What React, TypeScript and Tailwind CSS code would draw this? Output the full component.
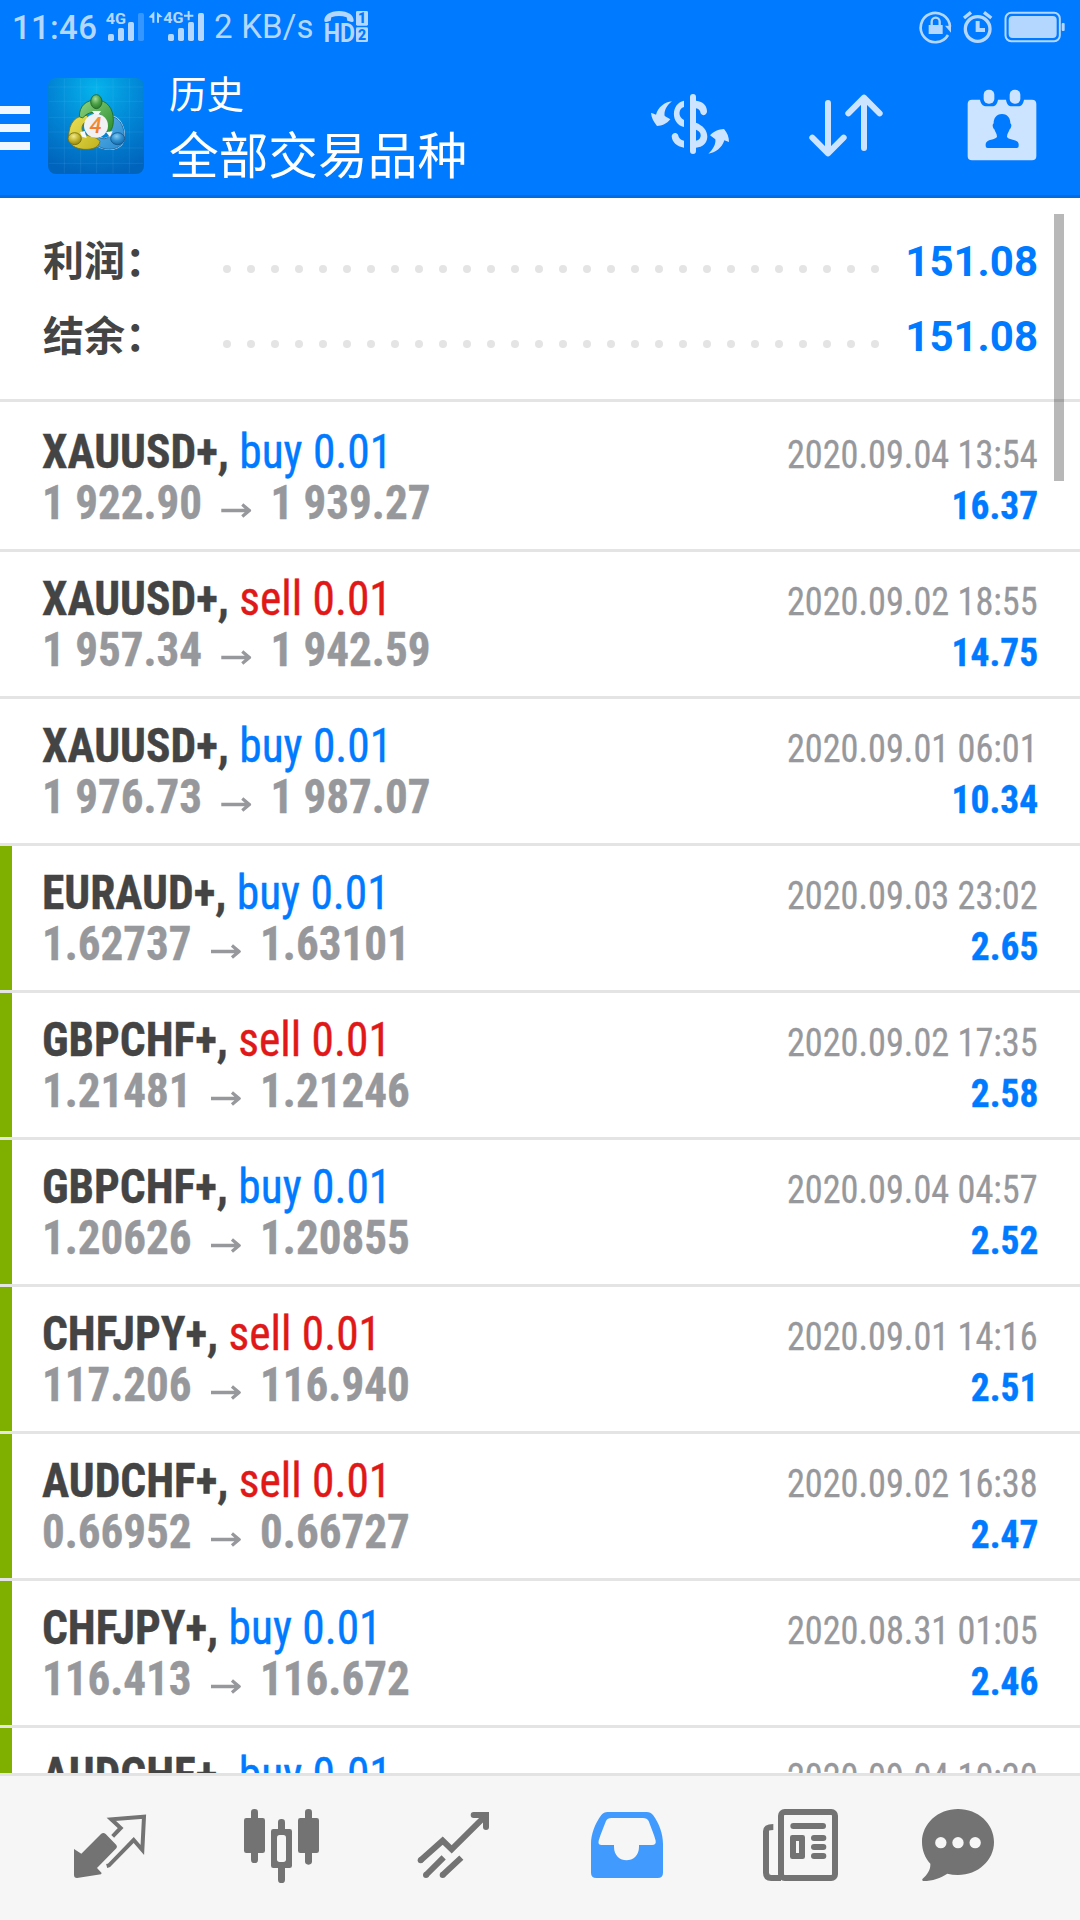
import type { ReactNode } from "react";
import clsx from "clsx";

type Side = "buy" | "sell";

interface Deal {
  symbol: string;
  side: Side;
  volume: string;
  open: string;
  close: string;
  time: string;
  profit: string;
  marked?: boolean;
}

const deals: Deal[] = [
  { symbol: "XAUUSD+", side: "buy", volume: "0.01", open: "1 922.90", close: "1 939.27", time: "2020.09.04 13:54", profit: "16.37" },
  { symbol: "XAUUSD+", side: "sell", volume: "0.01", open: "1 957.34", close: "1 942.59", time: "2020.09.02 18:55", profit: "14.75" },
  { symbol: "XAUUSD+", side: "buy", volume: "0.01", open: "1 976.73", close: "1 987.07", time: "2020.09.01 06:01", profit: "10.34" },
  { symbol: "EURAUD+", side: "buy", volume: "0.01", open: "1.62737", close: "1.63101", time: "2020.09.03 23:02", profit: "2.65", marked: true },
  { symbol: "GBPCHF+", side: "sell", volume: "0.01", open: "1.21481", close: "1.21246", time: "2020.09.02 17:35", profit: "2.58", marked: true },
  { symbol: "GBPCHF+", side: "buy", volume: "0.01", open: "1.20626", close: "1.20855", time: "2020.09.04 04:57", profit: "2.52", marked: true },
  { symbol: "CHFJPY+", side: "sell", volume: "0.01", open: "117.206", close: "116.940", time: "2020.09.01 14:16", profit: "2.51", marked: true },
  { symbol: "AUDCHF+", side: "sell", volume: "0.01", open: "0.66952", close: "0.66727", time: "2020.09.02 16:38", profit: "2.47", marked: true },
  { symbol: "CHFJPY+", side: "buy", volume: "0.01", open: "116.413", close: "116.672", time: "2020.08.31 01:05", profit: "2.46", marked: true },
  { symbol: "AUDCHF+", side: "buy", volume: "0.01", open: "0.66512", close: "0.66735", time: "2020.09.04 10:20", profit: "2.44", marked: true },
];

const totals = [
  { label: "利润：", value: "151.08" },
  { label: "结余：", value: "151.08" },
];

function StatusBar() {
  return (
    <div className="flex h-[54px] items-center text-[33px] leading-[54px] text-[#b3d7ff]">
      <span className="ml-[12px] mt-[2px] w-[92px] whitespace-nowrap font-medium tracking-[0.3px]">11:46</span>
      <svg className="h-[54px] w-[106px] shrink-0 fill-[#b3d7ff]" viewBox="312 0 318 162" fontFamily="Roboto" fontWeight="700">
        <text x="317" y="71" fontSize="43" textLength="61" lengthAdjust="spacingAndGlyphs">4G</text>
        <rect x="324" y="102" width="18" height="21" rx="5" />
        <rect x="354" y="84" width="18" height="39" rx="5" />
        <rect x="384" y="66" width="18" height="57" rx="5" />
        <rect x="414" y="39" width="18" height="84" rx="5" opacity="0.3" />
        <path d="M446 52L463 34V68H457V54ZM471 36L488 51L477 52V68H471Z" />
        <text x="490" y="68" fontSize="43" textLength="61" lengthAdjust="spacingAndGlyphs">4G</text>
        <path d="M563 33h6v11h11v6h-11v11h-6v-11h-11v-6h11z" />
        <rect x="504" y="102" width="18" height="21" rx="5" />
        <rect x="534" y="84" width="18" height="39" rx="5" />
        <rect x="564" y="66" width="18" height="57" rx="5" />
        <rect x="594" y="39" width="18" height="84" rx="5" />
      </svg>
      <span className="ml-[4px] w-[108px] whitespace-nowrap tracking-[0.2px]">2 KB/s</span>
      <svg className="h-[54px] w-[48px] shrink-0 fill-[#b3d7ff]" viewBox="966 0 144 162" fontFamily="Roboto" fontWeight="900">
        <path d="M973 63C972 46 990 33 1017 33S1062 46 1061 63Q1060 67 1055 66L1042 62L1040 52Q1017 44 994 52L992 62L979 66Q974 67 973 63Z" />
        <text x="971" y="126" fontSize="80" textLength="94" lengthAdjust="spacingAndGlyphs" fontWeight="700">HD</text>
        <rect x="1068" y="33" width="36" height="44" rx="4" />
        <rect x="1068" y="82" width="36" height="44" rx="4" />
        <text x="1086" y="70" fontSize="42" textAnchor="middle" fill="#007aff">1</text>
        <text x="1086" y="119" fontSize="42" textAnchor="middle" fill="#007aff">2</text>
      </svg>
      <svg className="ml-auto mr-[10.67px] h-[54px] w-[156px] shrink-0" viewBox="880 0 468 162" fill="none" stroke="#b3d7ff">
        <path d="M991 80A44 44 0 1 0 985 105" strokeWidth="8" />
        <path d="M976 77L994 78V98Z" fill="#b3d7ff" stroke="none" />
        <rect x="927" y="75" width="42" height="27" fill="#b3d7ff" stroke="none" />
        <path d="M936 76V65a12 12 0 0 1 24 0V76" strokeWidth="7" />
        <circle cx="1074" cy="87" r="37" strokeWidth="10" />
        <path d="M1033 54L1054 37M1115 54L1093 37" strokeWidth="10" />
        <path d="M1074 63V90H1096" strokeWidth="12" />
        <rect x="1157.500" y="38.500" width="163" height="85" rx="17" strokeWidth="6" />
        <rect x="1167" y="48" width="144" height="66" rx="12" fill="#b3d7ff" stroke="none" />
        <rect x="1326" y="69" width="9" height="24" rx="3" fill="#b3d7ff" stroke="none" />
      </svg>
    </div>
  );
}

function AppLogo() {
  return (
    <svg className="h-[96px] w-[96px] shrink-0" viewBox="144 234 288 288">
      <defs>
        <radialGradient id="tile" cx="0.5" cy="0.12" r="0.9">
          <stop offset="0" stopColor="#05b4ec" />
          <stop offset="0.5" stopColor="#0287d6" />
          <stop offset="1" stopColor="#0064bc" />
        </radialGradient>
        <linearGradient id="green" x1="0" y1="0" x2="1" y2="1">
          <stop offset="0" stopColor="#8fd583" />
          <stop offset="1" stopColor="#2a8c2c" />
        </linearGradient>
        <linearGradient id="yellow" x1="0" y1="0" x2="1" y2="1">
          <stop offset="0" stopColor="#ece25a" />
          <stop offset="1" stopColor="#c0b21c" />
        </linearGradient>
        <linearGradient id="blue" x1="0" y1="0" x2="1" y2="1">
          <stop offset="0" stopColor="#5fb4ea" />
          <stop offset="1" stopColor="#2a8cd0" />
        </linearGradient>
        <radialGradient id="greenHead" cx="0.42" cy="0.3" r="0.75">
          <stop offset="0" stopColor="#a6dc9c" />
          <stop offset="0.5" stopColor="#4fa348" />
          <stop offset="1" stopColor="#27752a" />
        </radialGradient>
        <radialGradient id="yellowHead" cx="0.42" cy="0.3" r="0.75">
          <stop offset="0" stopColor="#f0ea90" />
          <stop offset="0.5" stopColor="#c4b62e" />
          <stop offset="1" stopColor="#8b8010" />
        </radialGradient>
        <radialGradient id="blueHead" cx="0.42" cy="0.3" r="0.75">
          <stop offset="0" stopColor="#84caf2" />
          <stop offset="0.5" stopColor="#3190d0" />
          <stop offset="1" stopColor="#1262a2" />
        </radialGradient>
        <linearGradient id="four" x1="0" y1="0" x2="0" y2="1">
          <stop offset="0" stopColor="#f9a12e" />
          <stop offset="1" stopColor="#ea6a30" />
        </linearGradient>
      </defs>
      <rect x="144" y="234" width="288" height="288" rx="24" fill="url(#tile)" />
      <path
        d="M193 236V520M242 236V520M290 236V520M339 236V520M388 236V520M146 261H430M146 304H430M146 352H430M146 396H430M146 444H430M146 490H430"
        stroke="#7fd4ff"
        strokeOpacity="0.18"
        strokeWidth="2"
      />
      <g strokeWidth="2.500">
        <path d="M338 350C362 356 376 386 372 418C366 444 338 450 318 447C290 442 274 424 266 402L290 406C306 422 326 418 332 402C334 390 330 380 322 372Z" fill="url(#blue)" stroke="#d4ecfb" strokeWidth="5" />
        <path d="M338 350C362 356 376 386 372 418C366 444 338 450 318 447C290 442 274 424 266 402L290 406C306 422 326 418 332 402C334 390 330 380 322 372Z" fill="url(#blue)" stroke="#14609c" />
        <path d="M206 412C206 368 226 346 262 346L266 360C244 368 240 390 254 402C268 412 286 406 300 424C296 442 280 449 252 448C226 446 208 436 206 412Z" fill="url(#yellow)" stroke="#7c7108" />
        <path d="M238 350C238 318 258 300 288 300C322 300 340 326 340 360C340 380 334 392 326 398L306 384C314 372 314 358 304 346C290 330 262 336 248 354Z" fill="url(#green)" stroke="#1a6a24" />
        <path d="M276 333H303L297 342H283ZM240 397L254 393L260 414L246 410ZM318 396L338 394L330 412Z" fill="#f4faff" />
        <ellipse cx="289" cy="305" rx="17" ry="21" fill="url(#greenHead)" stroke="#1f6424" />
        <ellipse cx="224" cy="416" rx="20" ry="18" fill="url(#yellowHead)" stroke="#786d0c" />
        <ellipse cx="353" cy="416" rx="21" ry="18" fill="url(#blueHead)" stroke="#10558f" />
      </g>
      <circle cx="288" cy="377" r="36" fill="#f1f1f4" />
      <text x="287" y="400" fontSize="66" fontFamily="Roboto" fontWeight="500" fontStyle="italic" textAnchor="middle" fill="url(#four)">4</text>
    </svg>
  );
}

function HeaderIcon({ viewBox, label, children }: { viewBox: string; label: string; children: ReactNode }) {
  return (
    <button aria-label={label} className="flex w-[156px] items-center justify-center">
      <svg className="h-[96px] w-[96px] fill-[#cce4ff]" viewBox={viewBox}>
        {children}
      </svg>
    </button>
  );
}

function Header() {
  return (
    <header className="flex h-[198px] shrink-0 flex-col border-b-[3px] border-[#006cdf] bg-[#007aff]">
      <StatusBar />
      <div className="flex h-[141px] items-center">
        <button aria-label="Menu" className="mt-[7px] flex w-[30px] flex-col gap-[10px]">
          <span className="h-[8px] bg-[#f0f7ff]" />
          <span className="h-[8px] bg-[#f0f7ff]" />
          <span className="h-[8px] bg-[#f0f7ff]" />
        </button>
        <div className="ml-[18px] mt-[3px]">
          <AppLogo />
        </div>
        <div className="ml-[25px] mt-[8px] flex flex-col gap-[2px] text-white">
          <span className="text-[37.5px] leading-[54px]">历史</span>
          <span className="text-[49.7px] leading-[66px]">全部交易品种</span>
        </div>
        <div className="ml-auto mt-px flex">
          <HeaderIcon viewBox="66 231 288 288" label="Symbols">
            <rect x="210" y="282" width="18" height="180" rx="9" />
            <path d="M192 302V321C176 325 172 350 192 360V381C152 372 152 310 192 302ZM228 302C250 304 262 318 261 336C256 349 246 347 242 340C240 330 236 326 228 325ZM228 368C248 376 262 390 262 410C261 430 248 441 228 443V422C248 418 246 394 228 389ZM192 443C170 440 156 426 155 408C158 396 170 397 174 404C176 414 182 420 192 422Z" />
            <path d="M156 304C138 318 132 334 134 348L151 358C140 372 126 377 111 378C102 366 94 354 93 339Q98 340 108 344C114 322 134 306 156 304ZM265 461C280 448 288 432 286 418L270 406C280 394 296 388 312 387C322 398 327 412 327 426L313 421C306 444 286 458 265 461Z" />
          </HeaderIcon>
          <HeaderIcon viewBox="534 231 288 288" label="Sort">
            <path d="M624 309V460M577 413L624 460L671 413M732 444V293M685 340L732 293L779 340" fill="none" stroke="#cce4ff" strokeWidth="18" strokeLinecap="round" strokeLinejoin="round" />
          </HeaderIcon>
          <HeaderIcon viewBox="1002 231 288 288" label="Period">
            <path
              fillRule="evenodd"
              d="M1056 299H1080C1082 312 1090 319 1100 319H1116C1126 319 1132 312 1134 299H1158C1160 312 1166 319 1176 319H1194C1204 319 1210 312 1212 299H1236Q1249 299 1249 312V468Q1249 481 1236 481H1056Q1043 481 1043 468V312Q1043 299 1056 299ZM1146 342C1128 342 1121 356 1121 370C1115 374 1119 384 1123 388C1125 396 1131 400 1131 410C1128 420 1098 416 1097 432V438Q1097 444 1103 444H1190Q1196 444 1196 438V432C1194 416 1164 420 1161 410C1161 400 1167 396 1169 388C1173 384 1177 374 1171 370C1171 356 1164 342 1146 342Z"
            />
            <rect x="1091" y="269" width="32" height="42" rx="15" />
            <rect x="1169" y="269" width="32" height="42" rx="15" />
          </HeaderIcon>
        </div>
      </div>
    </header>
  );
}

function TotalRow({ label, value }: { label: string; value: string }) {
  return (
    <div className="flex h-[75px] items-center pl-[43px] pr-[42px]">
      <span className="mt-[2px] w-[180px] text-[41px] font-bold leading-[75px] text-[#444]">{label}</span>
      <div className="mt-[15px] flex w-[656px] justify-between">
        {Array.from({ length: 28 }, (_, i) => (
          <span key={i} className="h-[8px] w-[8px] rounded-full bg-[#e4e4e4]" />
        ))}
      </div>
      <span className="ml-auto text-[42px] font-bold leading-[75px] text-[#007aff]">{value}</span>
    </div>
  );
}

function DealRow({ deal }: { deal: Deal }) {
  return (
    <li className="flex h-[147px] shrink-0 border-b-[3px] border-[#e4e4e4] font-['Roboto_Condensed','Roboto',sans-serif]">
      <div className={clsx("w-[12px] shrink-0", deal.marked && "bg-[#7fb000]")} />
      <div className="flex flex-1 justify-between pl-[30px] pr-[42px]">
        <div className="flex flex-col whitespace-nowrap pt-[21px] text-[48px] leading-[51px]">
          <div className="origin-left scale-x-[0.946] [-webkit-text-stroke:0.4px]">
            <span className="font-bold text-[#444]">{deal.symbol},</span>{" "}
            <span className={deal.side === "buy" ? "text-[#007aff]" : "text-[#e01818]"}>
              {deal.side} {deal.volume}
            </span>
          </div>
          <div className="flex origin-left scale-x-[0.938] font-bold text-[#97989c] [-webkit-text-stroke:0.4px]">
            <span>{deal.open}</span>
            <svg className="mx-[20.5px] h-[51px] w-[32px]" viewBox="0 0 32 51" fill="none" stroke="#97989c" strokeWidth="3.500">
              <path d="M0 33.500H30M22.500 27.500L30 33.500L22.500 39.500" />
            </svg>
            <span>{deal.close}</span>
          </div>
        </div>
        <div className="flex flex-col items-end whitespace-nowrap pt-[25px] text-[39px] leading-[51px]">
          <span className="origin-right scale-x-[0.93] text-[#97989c] [-webkit-text-stroke:0.3px]">{deal.time}</span>
          <span className="origin-right scale-x-[0.96] font-bold text-[#007aff] [-webkit-text-stroke:0.4px]">{deal.profit}</span>
        </div>
      </div>
    </li>
  );
}

function NavIcon({ viewBox, label, active, children }: { viewBox: string; label: string; active?: boolean; children: ReactNode }) {
  return (
    <button aria-label={label} className="flex w-[172px] items-center justify-center">
      <svg className={clsx("h-[96px] w-[96px]", active ? "text-[#419bff]" : "text-[#737373]")} viewBox={viewBox} fill="currentColor">
        {children}
      </svg>
    </button>
  );
}

function BottomNav() {
  return (
    <nav className="flex h-[147px] shrink-0 border-t-[3px] border-[#e3e3e3] bg-[#f6f6f6] px-[24px]">
      <NavIcon viewBox="186 300 288 288" label="Quotes">
        <path d="M222 447L244 461L303 402Q310 396 317 402L349 435Q353 440 349 445L291 504L305 519L303 523L231 534Q222 534 222 525Z" />
        <path d="M338 409L362 384L334 358L432 350L427 450L401 420L327 496L320 498" fill="none" stroke="currentColor" strokeWidth="12" />
      </NavIcon>
      <NavIcon viewBox="702 300 288 288" label="Charts">
        <rect x="753" y="327" width="21" height="162" rx="10" />
        <rect x="732" y="354" width="63" height="105" rx="7" />
        <rect x="915" y="327" width="21" height="167" rx="10" />
        <rect x="894" y="354" width="63" height="105" rx="7" />
        <rect x="834" y="357" width="21" height="192" rx="10" />
        <rect x="813" y="387" width="63" height="117" rx="7" />
        <rect x="831" y="405" width="27" height="81" rx="8" fill="#f6f6f6" />
      </NavIcon>
      <NavIcon viewBox="138 300 288 288" label="Trade">
        <path d="M182 481L248 422L275 448L377 347M341 345H378V381M198 525L251 472M248 525L304 473" fill="none" stroke="currentColor" strokeWidth="18" />
        <circle cx="182" cy="481" r="9" />
        <circle cx="198" cy="525" r="9" />
        <circle cx="248" cy="525" r="9" />
        <circle cx="341" cy="345" r="9" />
        <circle cx="378" cy="381" r="9" />
        <circle cx="378" cy="345" r="9" />
      </NavIcon>
      <NavIcon viewBox="654 300 288 288" label="History" active>
        <path
          fillRule="evenodd"
          d="M743 336H860Q872 336 879 345C898 371 909 402 909 432V518Q909 534 893 534H709Q693 534 693 518V432C693 402 705 371 724 345Q731 336 743 336ZM754 354Q742 354 738 363C730 384 722 402 716 422Q713 435 725 435H762V441C762 494 837 494 837 441V435H876Q889 435 887 422C882 402 873 384 866 363Q861 354 849 354Z"
        />
      </NavIcon>
      <NavIcon viewBox="90 300 288 288" label="News">
        <rect x="183" y="336" width="162" height="198" rx="11" fill="none" stroke="currentColor" strokeWidth="18" />
        <path d="M160 381C145 381 138 384 138 394V518Q138 534 154 534H183" fill="none" stroke="currentColor" strokeWidth="18" />
        <rect x="211" y="369" width="107" height="18" rx="9" />
        <rect x="210" y="405" width="45" height="72" rx="7" />
        <rect x="228" y="423" width="9" height="36" fill="#f6f6f6" />
        <rect x="273" y="405" width="46" height="18" rx="9" />
        <rect x="273" y="432" width="46" height="18" rx="9" />
        <rect x="273" y="459" width="46" height="18" rx="9" />
      </NavIcon>
      <NavIcon viewBox="606 300 288 288" label="Messages">
        <path d="M714 327C774 327 822 371 822 426S774 525 714 525Q697 525 682 521C662 534 638 543 610 543Q604 541 608 536C622 524 632 510 631 491C615 474 606 451 606 426C606 371 654 327 714 327Z" />
        <circle cx="662.500" cy="428" r="17" fill="#f6f6f6" />
        <circle cx="714" cy="428" r="17" fill="#f6f6f6" />
        <circle cx="765.500" cy="428" r="17" fill="#f6f6f6" />
      </NavIcon>
    </nav>
  );
}

export default function App() {
  return (
    <div className="flex h-[1920px] w-[1080px] flex-col overflow-hidden bg-white font-['Roboto','Noto_Sans_CJK_SC',sans-serif]">
      <Header />
      <main className="relative flex min-h-0 flex-1 flex-col overflow-hidden">
        <section className="h-[204px] shrink-0 border-b-[3px] border-[#e4e4e4] pt-[26px]">
          {totals.map((row) => (
            <TotalRow key={row.label} label={row.label} value={row.value} />
          ))}
        </section>
        <ul className="flex flex-col pt-[3px]">
          {deals.map((deal, i) => (
            <DealRow key={i} deal={deal} />
          ))}
        </ul>
        <div className="absolute right-[16px] top-[16px] h-[267px] w-[10px] bg-black/28" />
      </main>
      <BottomNav />
    </div>
  );
}
